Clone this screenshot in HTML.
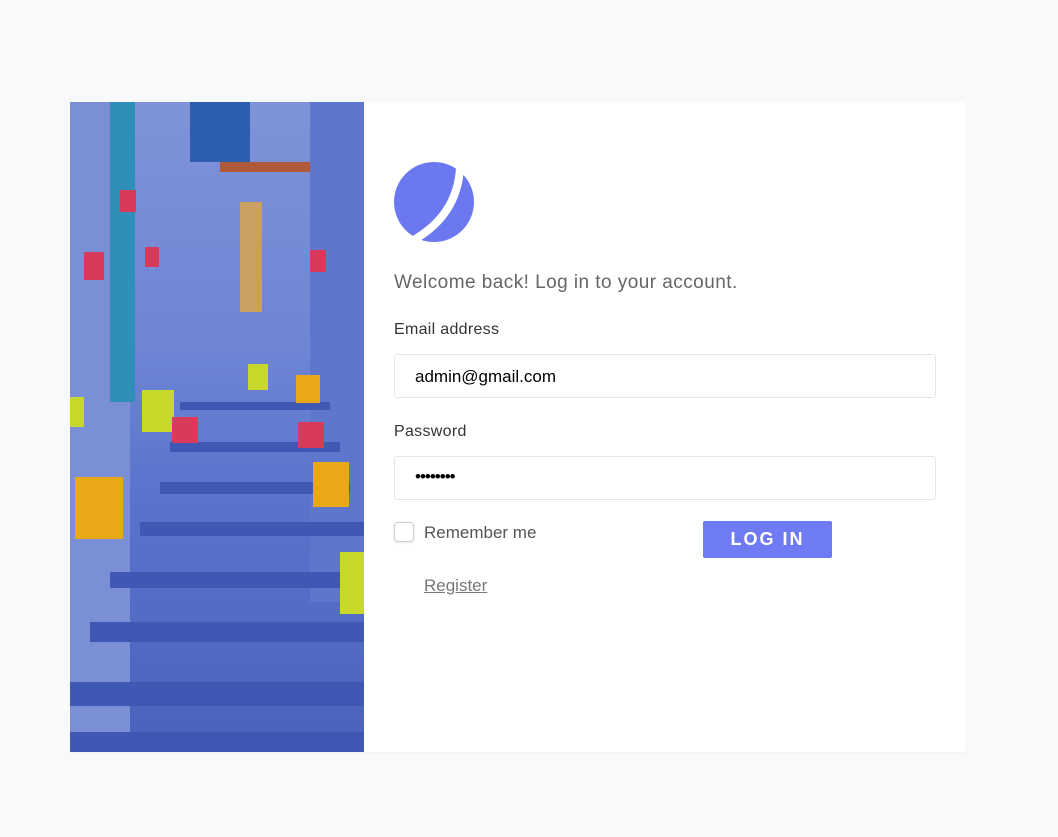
<!DOCTYPE html>
<html><head><style>
body{margin:0;background:#f8f9fb;width:1058px;height:837px;position:relative;font-family:"Liberation Sans",sans-serif;overflow:hidden}
.card{position:absolute;left:70px;top:102px;width:896px;height:650px;background:#fff;border-radius:4px;box-shadow:0 1px 3px rgba(0,0,0,.04)}
.img{position:absolute;left:70px;top:102px;width:294px;height:650px;overflow:hidden;background:linear-gradient(180deg,#7f93d8 0%,#6d84d4 40%,#5a74cc 60%,#4b62bb 100%)}
.t{position:absolute;color:#4a4a4a;font-size:16px}
.in{position:absolute;left:394px;width:540px;height:42px;border:1px solid #e3e5e8;border-radius:3px;background:#fff}
</style></head><body>
<div class="card"></div>
<div class="img">
<svg width="294" height="650">
<rect x="0" y="0" width="60" height="650" fill="#7a8fd6"/>
<rect x="40" y="0" width="25" height="300" fill="#2f8fb8"/>
<rect x="240" y="0" width="54" height="500" fill="#5e76cc"/>
<rect x="120" y="0" width="60" height="60" fill="#2c5fb0"/>
<rect x="170" y="100" width="22" height="110" fill="#c9a060"/>
<rect x="150" y="60" width="90" height="10" fill="#b05a3a"/>
<g fill="#3f58b3">
<rect x="110" y="300" width="150" height="8"/><rect x="100" y="340" width="170" height="10"/>
<rect x="90" y="380" width="190" height="12"/><rect x="70" y="420" width="224" height="14"/>
<rect x="40" y="470" width="254" height="16"/><rect x="20" y="520" width="274" height="20"/>
<rect x="0" y="580" width="294" height="24"/><rect x="0" y="630" width="294" height="20"/></g>
<g fill="#e8a818"><rect x="5" y="375" width="48" height="62"/><rect x="243" y="360" width="36" height="45"/><rect x="226" y="273" width="24" height="28"/></g>
<g fill="#c8d82a"><rect x="72" y="288" width="32" height="42"/><rect x="178" y="262" width="20" height="26"/><rect x="270" y="450" width="24" height="62"/><rect x="0" y="295" width="14" height="30"/></g>
<g fill="#d83a5a"><rect x="102" y="315" width="26" height="26"/><rect x="228" y="320" width="26" height="26"/><rect x="14" y="150" width="20" height="28"/><rect x="50" y="88" width="16" height="22"/><rect x="240" y="148" width="16" height="22"/><rect x="75" y="145" width="14" height="20"/></g>
</svg></div>
<svg style="position:absolute;left:394px;top:162px" width="82" height="82" viewBox="0 0 82 82">
<circle cx="40" cy="40" r="40" fill="#6b78f0"/>
<path d="M66 6 C64 40 46 64 16 80" stroke="#fff" stroke-width="8" fill="none"/>
</svg>
<div class="t" style="left:394px;top:272px;font-size:19px;color:#666;letter-spacing:0.45px">Welcome back! Log in to your account.</div>
<div class="t" style="left:394px;top:321px;color:#333;letter-spacing:0.3px">Email address</div>
<div class="in" style="top:354px"><span style="position:absolute;left:20px;top:12px;font-size:17px;color:#000">admin@gmail.com</span></div>
<div class="t" style="left:394px;top:423px;color:#333;letter-spacing:0.3px">Password</div>
<div class="in" style="top:456px"><span style="position:absolute;left:20px;top:10px;font-size:17px;color:#000;letter-spacing:-1px">••••••••</span></div>
<div style="position:absolute;left:394px;top:522px;width:18px;height:18px;border:1px solid #ccc;border-radius:4px;box-shadow:0 1px 2px rgba(0,0,0,.1)"></div>
<div class="t" style="left:424px;top:523px;font-size:17px;color:#555">Remember me</div>
<div style="position:absolute;left:703px;top:521px;width:129px;height:37px;background:#6f7bf2;border-radius:2px;color:#fff;font-size:18px;font-weight:bold;letter-spacing:2px;text-align:center;line-height:37px">LOG IN</div>
<div class="t" style="left:424px;top:576px;font-size:17px;color:#777;text-decoration:underline">Register</div>
</body></html>
